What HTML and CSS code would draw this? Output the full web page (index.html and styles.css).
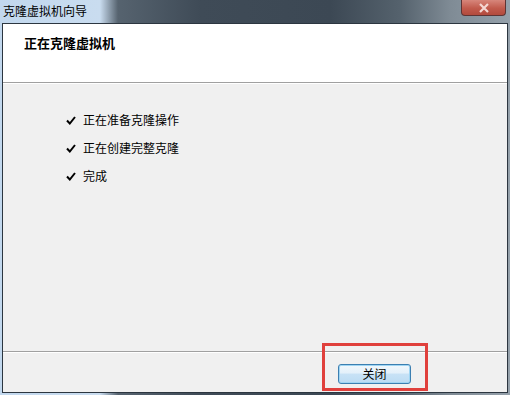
FILE: index.html
```html
<!DOCTYPE html>
<html lang="zh-CN">
<head>
    <meta charset="UTF-8">
    <title>克隆虚拟机向导</title>
    <link rel="stylesheet" href="styles.css">
</head>
<body>
    <div class="window">
        <div class="titlebar">
            <span class="title">克隆虚拟机向导</span>
            <div class="close-btn">
                <svg width="12" height="10" viewBox="0 0 12 10">
                    <path d="M2 1 L10 9 M10 1 L2 9" stroke="#f4d8d4" stroke-width="2.2" fill="none"/>
                </svg>
            </div>
        </div>

        <div class="dialog">
            <div class="header">
                <h1>正在克隆虚拟机</h1>
            </div>

            <div class="content">
                <ul class="steps">
                    <li><span class="check"><svg width="10" height="9" viewBox="0 0 10 9"><path d="M1 4.5 L3.8 7.5 L9 1" stroke="#000" stroke-width="2" fill="none"/></svg></span>正在准备克隆操作</li>
                    <li><span class="check"><svg width="10" height="9" viewBox="0 0 10 9"><path d="M1 4.5 L3.8 7.5 L9 1" stroke="#000" stroke-width="2" fill="none"/></svg></span>正在创建完整克隆</li>
                    <li><span class="check"><svg width="10" height="9" viewBox="0 0 10 9"><path d="M1 4.5 L3.8 7.5 L9 1" stroke="#000" stroke-width="2" fill="none"/></svg></span>完成</li>
                </ul>
            </div>

            <div class="footer">
                <button class="btn">关闭</button>
                <div class="highlight"></div>
            </div>
        </div>
    </div>
</body>
</html>
```

FILE: styles.css
```css
:root {
    --chrome-light: #c6dbef;
    --chrome-dark: #3e4a56;
    --frame: #2c3640;
    --panel: #f0f0f0;
    --line: #a0a0a0;
    --text: #000000;
    --mark: #e0403c;
}

html, body {
    margin: 0;
    padding: 0;
}

body {
    width: 510px;
    height: 395px;
    overflow: hidden;
    font-family: "Noto Sans CJK SC", "Liberation Sans", sans-serif;
    font-size: 12px;
    color: var(--text);
}

.window {
    width: 510px;
    height: 395px;
    display: flex;
    flex-direction: column;
    background: linear-gradient(90deg, #c2d8ee 0, #c9dcef 100px, #56636f 118px, #3f4b57 200px, #3c4854 330px, #55626d 400px, #7f8b95 450px, #95a1ab 510px);
}

.titlebar {
    height: 23px;
    flex-shrink: 0;
    display: flex;
    align-items: flex-start;
    justify-content: space-between;
}

.title {
    padding: 3px 0 0 3px;
    line-height: 16px;
    color: #000;
}

.close-btn {
    width: 45px;
    height: 16px;
    margin-right: 4px;
    border: 1px solid #5e3434;
    border-top: none;
    border-radius: 0 0 4px 4px;
    background: linear-gradient(#d7867b, #c15a4c 55%, #b24a3d);
    display: flex;
    align-items: center;
    justify-content: center;
    box-sizing: border-box;
}

.dialog {
    flex: 1;
    margin: 0 2px 2px 2px;
    border: 1px solid var(--frame);
    background: var(--panel);
    display: flex;
    flex-direction: column;
    position: relative;
}

.header {
    height: 59px;
    background: #ffffff;
    border-bottom: 1px solid var(--line);
    box-shadow: 0 1px 0 #ffffff;
    padding: 10px 0 0 21px;
    box-sizing: border-box;
}

.header h1 {
    margin: 0;
    font-size: 13px;
    font-weight: bold;
    line-height: 18px;
}

.content {
    flex: 1;
    padding-top: 29px;
}

.steps {
    list-style: none;
    margin: 0;
    padding: 0 0 0 63px;
    display: flex;
    flex-direction: column;
    gap: 12px;
}

.steps li {
    display: flex;
    align-items: center;
    height: 16px;
    line-height: 16px;
}

.check {
    width: 17px;
    display: flex;
    align-items: center;
}

.footer {
    height: 41px;
    border-top: 1px solid var(--line);
    box-shadow: inset 0 1px 0 #ffffff;
    display: flex;
    justify-content: flex-end;
    align-items: flex-start;
    padding: 12px 96px 0 0;
    box-sizing: border-box;
    position: relative;
}

.btn {
    width: 73px;
    height: 20px;
    padding: 0;
    font-family: inherit;
    font-size: 12px;
    line-height: 16px;
    color: #000;
    border: 1px solid #3c7fb1;
    border-radius: 3px;
    background: linear-gradient(#f2f8fc 0, #e3f0fa 45%, #c8e2f6 50%, #bcdcf3 100%);
    box-shadow: inset 0 0 0 1px #9fd5f3;
}

.highlight {
    position: absolute;
    left: 319px;
    top: -9px;
    width: 106px;
    height: 48px;
    border: 3px solid var(--mark);
    box-sizing: border-box;
}
```
